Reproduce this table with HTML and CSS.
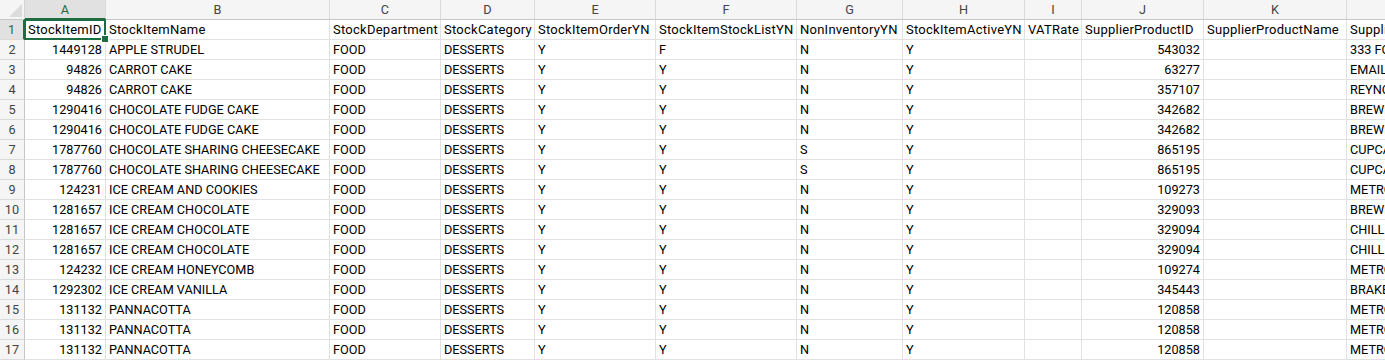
FILE: index.html
```html
<!DOCTYPE html>
<html lang="en">
<head>
<meta charset="utf-8">
<title>Stock items</title>
<link rel="stylesheet" href="styles.css">
</head>
<body>
<div class="sheet">
  <div class="corner"><span class="tri"></span></div>
  <div class="ch sel">A</div><div class="ch">B</div><div class="ch">C</div><div class="ch">D</div><div class="ch">E</div><div class="ch">F</div><div class="ch">G</div><div class="ch">H</div><div class="ch">I</div><div class="ch">J</div><div class="ch">K</div><div class="ch"></div>

  <div class="rh sel">1</div>
  <div class="c hd active">StockItemID</div><div class="c hd">StockItemName</div><div class="c hd">StockDepartment</div><div class="c hd">StockCategory</div><div class="c hd">StockItemOrderYN</div><div class="c hd">StockItemStockListYN</div><div class="c hd">NonInventoryYN</div><div class="c hd">StockItemActiveYN</div><div class="c hd">VATRate</div><div class="c hd">SupplierProductID</div><div class="c hd">SupplierProductName</div><div class="c hd">SupplierName</div>

  <div class="rh">2</div>
  <div class="c n">1449128</div><div class="c">APPLE STRUDEL</div><div class="c">FOOD</div><div class="c">DESSERTS</div><div class="c">Y</div><div class="c">F</div><div class="c">N</div><div class="c">Y</div><div class="c"></div><div class="c n">543032</div><div class="c"></div><div class="c">333 FOODS</div>

  <div class="rh">3</div>
  <div class="c n">94826</div><div class="c">CARROT CAKE</div><div class="c">FOOD</div><div class="c">DESSERTS</div><div class="c">Y</div><div class="c">Y</div><div class="c">N</div><div class="c">Y</div><div class="c"></div><div class="c n">63277</div><div class="c"></div><div class="c">EMAIL ORDERS</div>

  <div class="rh">4</div>
  <div class="c n">94826</div><div class="c">CARROT CAKE</div><div class="c">FOOD</div><div class="c">DESSERTS</div><div class="c">Y</div><div class="c">Y</div><div class="c">N</div><div class="c">Y</div><div class="c"></div><div class="c n">357107</div><div class="c"></div><div class="c">REYNOLDS</div>

  <div class="rh">5</div>
  <div class="c n">1290416</div><div class="c">CHOCOLATE FUDGE CAKE</div><div class="c">FOOD</div><div class="c">DESSERTS</div><div class="c">Y</div><div class="c">Y</div><div class="c">N</div><div class="c">Y</div><div class="c"></div><div class="c n">342682</div><div class="c"></div><div class="c">BREWERS</div>

  <div class="rh">6</div>
  <div class="c n">1290416</div><div class="c">CHOCOLATE FUDGE CAKE</div><div class="c">FOOD</div><div class="c">DESSERTS</div><div class="c">Y</div><div class="c">Y</div><div class="c">N</div><div class="c">Y</div><div class="c"></div><div class="c n">342682</div><div class="c"></div><div class="c">BREWERS</div>

  <div class="rh">7</div>
  <div class="c n">1787760</div><div class="c">CHOCOLATE SHARING CHEESECAKE</div><div class="c">FOOD</div><div class="c">DESSERTS</div><div class="c">Y</div><div class="c">Y</div><div class="c">S</div><div class="c">Y</div><div class="c"></div><div class="c n">865195</div><div class="c"></div><div class="c">CUPCAKES</div>

  <div class="rh">8</div>
  <div class="c n">1787760</div><div class="c">CHOCOLATE SHARING CHEESECAKE</div><div class="c">FOOD</div><div class="c">DESSERTS</div><div class="c">Y</div><div class="c">Y</div><div class="c">S</div><div class="c">Y</div><div class="c"></div><div class="c n">865195</div><div class="c"></div><div class="c">CUPCAKES</div>

  <div class="rh">9</div>
  <div class="c n">124231</div><div class="c">ICE CREAM AND COOKIES</div><div class="c">FOOD</div><div class="c">DESSERTS</div><div class="c">Y</div><div class="c">Y</div><div class="c">N</div><div class="c">Y</div><div class="c"></div><div class="c n">109273</div><div class="c"></div><div class="c">METRO</div>

  <div class="rh">10</div>
  <div class="c n">1281657</div><div class="c">ICE CREAM CHOCOLATE</div><div class="c">FOOD</div><div class="c">DESSERTS</div><div class="c">Y</div><div class="c">Y</div><div class="c">N</div><div class="c">Y</div><div class="c"></div><div class="c n">329093</div><div class="c"></div><div class="c">BREWERS</div>

  <div class="rh">11</div>
  <div class="c n">1281657</div><div class="c">ICE CREAM CHOCOLATE</div><div class="c">FOOD</div><div class="c">DESSERTS</div><div class="c">Y</div><div class="c">Y</div><div class="c">N</div><div class="c">Y</div><div class="c"></div><div class="c n">329094</div><div class="c"></div><div class="c">CHILLIS</div>

  <div class="rh">12</div>
  <div class="c n">1281657</div><div class="c">ICE CREAM CHOCOLATE</div><div class="c">FOOD</div><div class="c">DESSERTS</div><div class="c">Y</div><div class="c">Y</div><div class="c">N</div><div class="c">Y</div><div class="c"></div><div class="c n">329094</div><div class="c"></div><div class="c">CHILLIS</div>

  <div class="rh">13</div>
  <div class="c n">124232</div><div class="c">ICE CREAM HONEYCOMB</div><div class="c">FOOD</div><div class="c">DESSERTS</div><div class="c">Y</div><div class="c">Y</div><div class="c">N</div><div class="c">Y</div><div class="c"></div><div class="c n">109274</div><div class="c"></div><div class="c">METRO</div>

  <div class="rh">14</div>
  <div class="c n">1292302</div><div class="c">ICE CREAM VANILLA</div><div class="c">FOOD</div><div class="c">DESSERTS</div><div class="c">Y</div><div class="c">Y</div><div class="c">N</div><div class="c">Y</div><div class="c"></div><div class="c n">345443</div><div class="c"></div><div class="c">BRAKES</div>

  <div class="rh">15</div>
  <div class="c n">131132</div><div class="c">PANNACOTTA</div><div class="c">FOOD</div><div class="c">DESSERTS</div><div class="c">Y</div><div class="c">Y</div><div class="c">N</div><div class="c">Y</div><div class="c"></div><div class="c n">120858</div><div class="c"></div><div class="c">METRO</div>

  <div class="rh">16</div>
  <div class="c n">131132</div><div class="c">PANNACOTTA</div><div class="c">FOOD</div><div class="c">DESSERTS</div><div class="c">Y</div><div class="c">Y</div><div class="c">N</div><div class="c">Y</div><div class="c"></div><div class="c n">120858</div><div class="c"></div><div class="c">METRO</div>

  <div class="rh">17</div>
  <div class="c n">131132</div><div class="c">PANNACOTTA</div><div class="c">FOOD</div><div class="c">DESSERTS</div><div class="c">Y</div><div class="c">Y</div><div class="c">N</div><div class="c">Y</div><div class="c"></div><div class="c n">120858</div><div class="c"></div><div class="c">METRO</div>
</div>
</body>
</html>
```

FILE: styles.css
```css
html, body {
  margin: 0;
  padding: 0;
  background: #ffffff;
  overflow: hidden;
}

.sheet {
  display: grid;
  grid-template-columns: 25px 81px 224px 111px 94px 121px 141px 106px 122px 57px 122px 143px 39px;
  grid-auto-rows: 20px;
  font-family: Roboto, "Liberation Sans", Arial, sans-serif;
  font-size: 12.7px;
  color: #000000;
  width: 1385px;
}

.sheet > div {
  box-sizing: border-box;
  white-space: nowrap;
  overflow: hidden;
}

.corner {
  position: relative;
  background: #f5f5f5;
  border-right: 1px solid #d4d4d4;
  border-bottom: 1px solid #c6c6c6;
}

.corner .tri {
  position: absolute;
  right: 2px;
  bottom: 2px;
  width: 0;
  height: 0;
  border-left: 13px solid transparent;
  border-bottom: 13px solid #dcdcdc;
}

.ch {
  background: #f5f5f5;
  border-right: 1px solid #dadada;
  border-bottom: 1px solid #c6c6c6;
  color: #444444;
  text-align: center;
  line-height: 19px;
  font-size: 12.7px;
}

.rh {
  background: #f5f5f5;
  border-right: 1px solid #c6c6c6;
  border-bottom: 1px solid #dadada;
  color: #444444;
  text-align: center;
  line-height: 19px;
  font-size: 12.7px;
}

.ch.sel,
.rh.sel {
  background: #e1e1e1;
  color: #1e6c41;
}

.ch.sel {
  border-bottom: 2px solid #1e6c41;
}

.rh.sel {
  border-right: 2px solid #1e6c41;
}

.c {
  border-right: 1px solid #e1e1e1;
  border-bottom: 1px solid #e1e1e1;
  padding: 0 3px;
  line-height: 20px;
}

.c.n {
  text-align: right;
}

.c.hd {
  font-size: 13px;
  letter-spacing: 0.25px;
}

.c.active {
  position: relative;
  overflow: visible;
}

.c.active::after {
  content: "";
  position: absolute;
  left: -1px;
  top: -1px;
  right: -1px;
  bottom: -1px;
  border: 2px solid #1e6c41;
}

.c.active::before {
  content: "";
  position: absolute;
  right: -4px;
  bottom: -4px;
  width: 6px;
  height: 6px;
  background: #1e6c41;
  border: 1px solid #ffffff;
  z-index: 2;
}
```
